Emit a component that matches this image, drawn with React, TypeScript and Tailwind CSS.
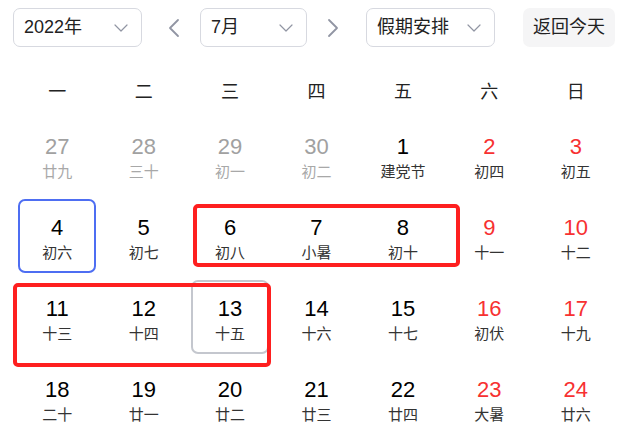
import React from 'react';

type Day = { d: number; l: string; red?: boolean; prev?: boolean; sel?: boolean; today?: boolean };

const weeks: Day[][] = [
  [
    { d: 27, l: '廿九', prev: true },
    { d: 28, l: '三十', prev: true },
    { d: 29, l: '初一', prev: true },
    { d: 30, l: '初二', prev: true },
    { d: 1, l: '建党节' },
    { d: 2, l: '初四', red: true },
    { d: 3, l: '初五', red: true },
  ],
  [
    { d: 4, l: '初六', sel: true },
    { d: 5, l: '初七' },
    { d: 6, l: '初八' },
    { d: 7, l: '小暑' },
    { d: 8, l: '初十' },
    { d: 9, l: '十一', red: true },
    { d: 10, l: '十二', red: true },
  ],
  [
    { d: 11, l: '十三' },
    { d: 12, l: '十四' },
    { d: 13, l: '十五', today: true },
    { d: 14, l: '十六' },
    { d: 15, l: '十七' },
    { d: 16, l: '初伏', red: true },
    { d: 17, l: '十九', red: true },
  ],
  [
    { d: 18, l: '二十' },
    { d: 19, l: '廿一' },
    { d: 20, l: '廿二' },
    { d: 21, l: '廿三' },
    { d: 22, l: '廿四' },
    { d: 23, l: '大暑', red: true },
    { d: 24, l: '廿六', red: true },
  ],
];

const Chevron = () => (
  <svg width="16" height="10" viewBox="0 0 16 10" fill="none" className="shrink-0">
    <path d="M2 2l6 6 6-6" stroke="#9195a3" strokeWidth="1.2" strokeLinecap="round" strokeLinejoin="round" />
  </svg>
);

const Select = ({ label, width }: { label: string; width: string }) => (
  <div className={`${width} h-[39px] flex items-center justify-between pl-[10px] pr-[12px] border border-[#d7d9e0] rounded-[7px] bg-white`}>
    <span className="text-[18px] text-[#222]">{label}</span>
    <Chevron />
  </div>
);

const Arrow = ({ dir }: { dir: 'l' | 'r' }) => (
  <svg width="12" height="20" viewBox="0 0 12 20" fill="none" className="shrink-0">
    <path d={dir === 'l' ? 'M10 2L2 10l8 8' : 'M2 2l8 8-8 8'} stroke="#9195a3" strokeWidth="1.8" strokeLinecap="round" strokeLinejoin="round" />
  </svg>
);

const App: React.FC = () => {
  return (
    <div
      className="relative w-[633px] h-[444px] bg-white overflow-hidden"
      style={{ fontFamily: '"Liberation Sans", Arial, "Noto Sans CJK SC", sans-serif' }}
    >
      <div className="flex items-center pl-[13px] pt-[8px]">
        <Select label="2022年" width="w-[129px]" />
        <div className="ml-[26px]"><Arrow dir="l" /></div>
        <div className="ml-[20px]"><Select label="7月" width="w-[107px]" /></div>
        <div className="ml-[20px]"><Arrow dir="r" /></div>
        <div className="ml-[27px]"><Select label="假期安排" width="w-[129px]" /></div>
        <button className="ml-[28px] w-[92px] h-[39px] rounded-[7px] bg-[#f5f5f6] text-[18px] text-[#222]">返回今天</button>
      </div>

      <div className="px-[14px] mt-[23px]">
        <div className="grid grid-cols-7 h-[44px] items-center">
          {['一', '二', '三', '四', '五', '六', '日'].map((w) => (
            <div key={w} className="text-center text-[18px] text-[#222]">{w}</div>
          ))}
        </div>
        <div className="mt-[4px] flex flex-col gap-[7px]">
          {weeks.map((row, i) => (
            <div key={i} className="grid grid-cols-7">
              {row.map((c) => (
                <div
                  key={c.d}
                  className={`mx-[4px] h-[74px] rounded-[7px] border-2 flex flex-col items-center pt-[14px] ${
                    c.sel ? 'border-[#4e6ef2]' : c.today ? 'border-[#c4c7ce]' : 'border-transparent'
                  }`}
                >
                  <span
                    className={`text-[22px] leading-[26px] ${
                      c.prev ? 'text-[#a1a1a1]' : c.red ? 'text-[#f73131]' : 'text-black'
                    }`}
                  >
                    {c.d}
                  </span>
                  <span className={`mt-[1px] text-[15px] leading-[22px] ${c.prev ? 'text-[#a8a8a8]' : 'text-[#333]'}`}>
                    {c.l}
                  </span>
                </div>
              ))}
            </div>
          ))}
        </div>
      </div>

      <div className="absolute left-[193px] top-[204px] w-[267px] h-[63px] border-4 border-[#fe1f1f] rounded-[5px]" />
      <div className="absolute left-[13px] top-[283px] w-[258px] h-[84px] border-4 border-[#fe1f1f] rounded-[5px]" />
    </div>
  );
};

export default App;
